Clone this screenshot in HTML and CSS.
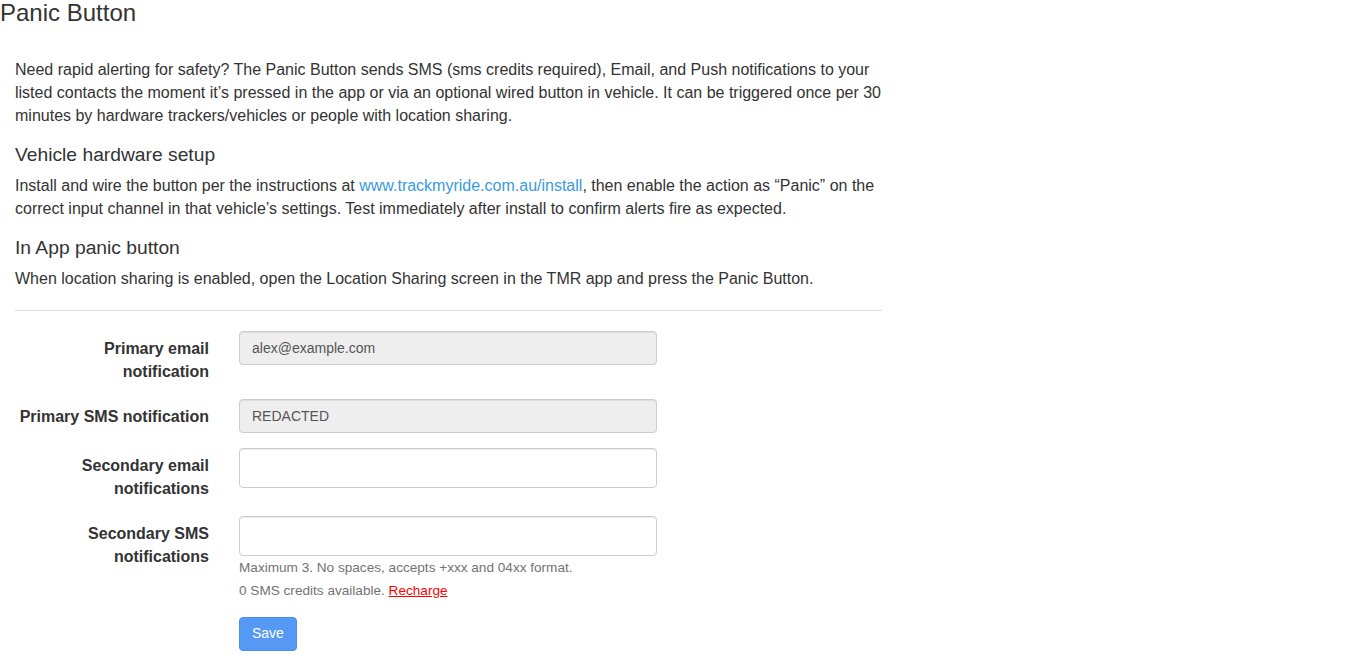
FILE: index.html
```html
<!DOCTYPE html>
<html lang="en">
<head>
<meta charset="utf-8">
<title>Panic Button</title>
<link rel="stylesheet" href="styles.css">
</head>
<body>
<h3 class="page-title">Panic Button</h3>
<div class="content">
  <p>Need rapid alerting for safety? The Panic Button sends SMS (sms credits required), Email, and Push notifications to your listed contacts the moment it’s pressed in the app or via an optional wired button in vehicle. It can be triggered once per 30 minutes by hardware trackers/vehicles or people with location sharing.</p>
  <h4 class="section-title">Vehicle hardware setup</h4>
  <p>Install and wire the button per the instructions at <a class="link" href="#">www.trackmyride.com.au/install</a>, then enable the action as “Panic” on the correct input channel in that vehicle’s settings. Test immediately after install to confirm alerts fire as expected.</p>
  <h4 class="section-title">In App panic button</h4>
  <p>When location sharing is enabled, open the Location Sharing screen in the TMR app and press the Panic Button.</p>
  <hr class="divider">
  <form class="form">
    <div class="form-row">
      <label class="control-label">Primary email notification</label>
      <div class="field">
        <input class="input" type="text" value="alex@example.com" readonly>
      </div>
    </div>
    <div class="form-row">
      <label class="control-label">Primary SMS notification</label>
      <div class="field">
        <input class="input" type="text" value="REDACTED" readonly>
      </div>
    </div>
    <div class="form-row">
      <label class="control-label">Secondary email notifications</label>
      <div class="field">
        <input class="input input-tall" type="text">
      </div>
    </div>
    <div class="form-row">
      <label class="control-label">Secondary SMS notifications</label>
      <div class="field">
        <input class="input input-tall" type="text">
        <div class="help">Maximum 3. No spaces, accepts +xxx and 04xx format.</div>
        <div class="help">0 SMS credits available. <a class="recharge" href="#">Recharge</a></div>
      </div>
    </div>
    <div class="form-row">
      <div class="label-spacer"></div>
      <div class="field">
        <button class="btn-save" type="button">Save</button>
      </div>
    </div>
  </form>
</div>
</body>
</html>
```

FILE: styles.css
```css
* { box-sizing: border-box; }
html, body { margin: 0; padding: 0; background: #fff; }
body {
  font-family: "Liberation Sans", Arial, Helvetica, sans-serif;
  font-size: 16px;
  line-height: 1.42857;
  color: #333;
}
.page-title {
  margin: 0;
  font-size: 24px;
  font-weight: 400;
  line-height: 1.1;
  color: #333;
}
.content {
  width: 897px;
  padding: 0 15px;
  margin-top: 33px;
}
.content p { margin: 0 0 10px; }
.section-title {
  margin: 16px 0 10px;
  font-size: 19.25px;
  font-weight: 400;
  line-height: 1.1;
}
.link { color: #3a9ae0; text-decoration: none; }
.divider {
  margin: 19.5px 0 20px;
  border: 0;
  border-top: 1px solid #ddd;
  height: 0;
}
.form { margin: 0 -15px; }
.form-row {
  display: flex;
  align-items: flex-start;
  margin-bottom: 15.2px;
}
.control-label, .label-spacer {
  width: 224px;
  flex: none;
  padding: 7px 15px 0;
  text-align: right;
  font-weight: 700;
}
.field {
  width: 448px;
  flex: none;
  padding: 0 15px;
}
.input {
  display: block;
  width: 100%;
  height: 34px;
  padding: 6px 12px;
  font-family: inherit;
  font-size: 14px;
  line-height: 1.42857;
  color: #555;
  background: #fff;
  border: 1px solid #ccc;
  border-radius: 4px;
  box-shadow: inset 0 1px 1px rgba(0,0,0,.075);
}
.input[readonly] { background: #eee; }
.input-tall { height: 40px; }
.help {
  font-size: 13.6px;
  line-height: 23px;
  color: #737373;
}
.recharge { color: #f00; text-decoration: underline; }
.btn-save {
  display: inline-block;
  height: 34px;
  padding: 6px 12px;
  font-family: inherit;
  font-size: 14px;
  line-height: 1.42857;
  color: #fff;
  background: #5599f5;
  border: 1px solid #4a8ef0;
  border-radius: 4px;
}
```
